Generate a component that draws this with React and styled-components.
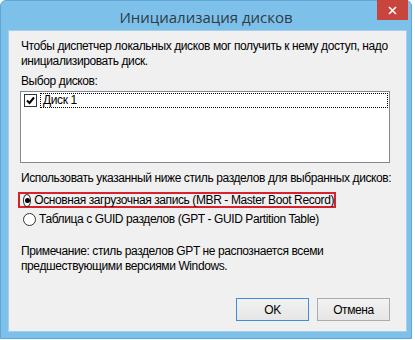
import React from "react";
import styled, { createGlobalStyle } from "styled-components";

const GlobalStyle = createGlobalStyle`
  body {
    margin: 0;
    background: #ffffff;
    font-family: "Liberation Sans", "Noto Sans", Arial, sans-serif;
    font-size: 12px;
    letter-spacing: -0.4px;
    color: #000;
  }
`;

const Window = styled.div`
  width: 412px;
  height: 339px;
  box-sizing: border-box;
  display: flex;
  flex-direction: column;
  background: #7dc1ea;
  border: 1px solid #5fa6d6;
  border-radius: 6px 6px 0 0;
`;

const TitleBar = styled.div`
  height: 29px;
  display: grid;
  grid-template-columns: 1fr auto 1fr;
  align-items: start;
`;

const Title = styled.div`
  grid-column: 2;
  padding-top: 6px;
  font-family: "Open Sans", "Noto Sans", sans-serif;
  font-size: 15px;
  letter-spacing: 0;
  color: #2f3b45;
`;

const CloseButton = styled.div`
  grid-column: 3;
  justify-self: end;
  margin-right: 3px;
  margin-top: -1px;
  width: 31px;
  height: 20px;
  background: #c7453c;
  display: flex;
  align-items: center;
  justify-content: center;
`;

const Content = styled.div`
  flex: 1;
  margin: 0 4px 6px 7px;
  background: #f0f0f0;
  border: 1px solid #a8cfe9;
  padding: 8px 16px 10px 12px;
  display: flex;
  flex-direction: column;
  white-space: nowrap;
`;

const Text = styled.p`
  margin: ${p => p.$top || 0}px 0 0;
  line-height: 15px;
`;

const ListBox = styled.div`
  margin: 2px 0 0 -1px;
  height: 68px;
  background: #fff;
  border: 1px solid #828790;
  padding: 1px;
`;

const ListItem = styled.div`
  display: flex;
  align-items: center;
  gap: 3px;
  height: 15px;
  padding-left: 2px;
`;

const ItemLabel = styled.span`
  flex: 1;
  height: 15px;
  line-height: 13px;
  box-sizing: border-box;
  border: 1px dotted #000;
  padding-left: 2px;
`;

const Box = styled.span`
  width: 11px;
  height: 11px;
  border: 1px solid #333;
  background: #fff;
  display: flex;
  align-items: center;
  justify-content: center;
`;

const Selected = styled.div`
  margin: 6px 0 0 -3px;
  width: 314px;
  border: 2px solid #d7232b;
`;

const RadioRow = styled.div`
  display: flex;
  align-items: center;
  gap: 3px;
  height: ${p => p.$h || 15}px;
  margin-top: ${p => p.$top || 0}px;
  padding-left: ${p => p.$pad || 0}px;
`;

const Radio = styled.span`
  width: 11px;
  height: 11px;
  border: 1px solid #333;
  border-radius: 50%;
  background: #fff;
  display: flex;
  align-items: center;
  justify-content: center;

  &::after {
    content: "";
    width: 5px;
    height: 5px;
    border-radius: 50%;
    background: ${p => (p.$on ? "#000" : "transparent")};
  }
`;

const Buttons = styled.div`
  margin-top: auto;
  display: flex;
  justify-content: flex-end;
  gap: 8px;
`;

const Button = styled.div`
  width: 71px;
  height: 21px;
  display: flex;
  align-items: center;
  justify-content: center;
  border: 1px solid ${p => (p.$default ? "#3c8fd8" : "#acacac")};
  background: linear-gradient(#f2f2f2, #e6e6e6);
`;

const Check = () => (
  <svg width="9" height="9" viewBox="0 0 9 9">
    <path d="M1 4.5 L3.5 7 L8 1.5" stroke="#000" strokeWidth="2" fill="none" />
  </svg>
);

const App = () => (
  <>
    <GlobalStyle />
    <Window>
      <TitleBar>
        <Title>Инициализация дисков</Title>
        <CloseButton>
          <svg width="9" height="9" viewBox="0 0 9 9">
            <path d="M1 1 L8 8 M8 1 L1 8" stroke="#fff" strokeWidth="1.6" />
          </svg>
        </CloseButton>
      </TitleBar>
      <Content>
        <Text>
          Чтобы диспетчер локальных дисков мог получить к нему доступ, надо
          <br />
          инициализировать диск.
        </Text>
        <Text $top={5}>Выбор дисков:</Text>
        <ListBox>
          <ListItem>
            <Box><Check /></Box>
            <ItemLabel>Диск 1</ItemLabel>
          </ListItem>
        </ListBox>
        <Text $top={8}>Использовать указанный ниже стиль разделов для выбранных дисков:</Text>
        <Selected>
          <RadioRow $h={12} $pad={3}>
            <Radio $on />
            Основная загрузочная запись (MBR - Master Boot Record)
          </RadioRow>
        </Selected>
        <RadioRow $h={18} $top={2} $pad={2}>
          <Radio />
          Таблица с GUID разделов (GPT - GUID Partition Table)
        </RadioRow>
        <Text $top={16}>
          Примечание: стиль разделов GPT не распознается всеми
          <br />
          предшествующими версиями Windows.
        </Text>
        <Buttons>
          <Button $default>OK</Button>
          <Button>Отмена</Button>
        </Buttons>
      </Content>
    </Window>
  </>
);

export default App;
